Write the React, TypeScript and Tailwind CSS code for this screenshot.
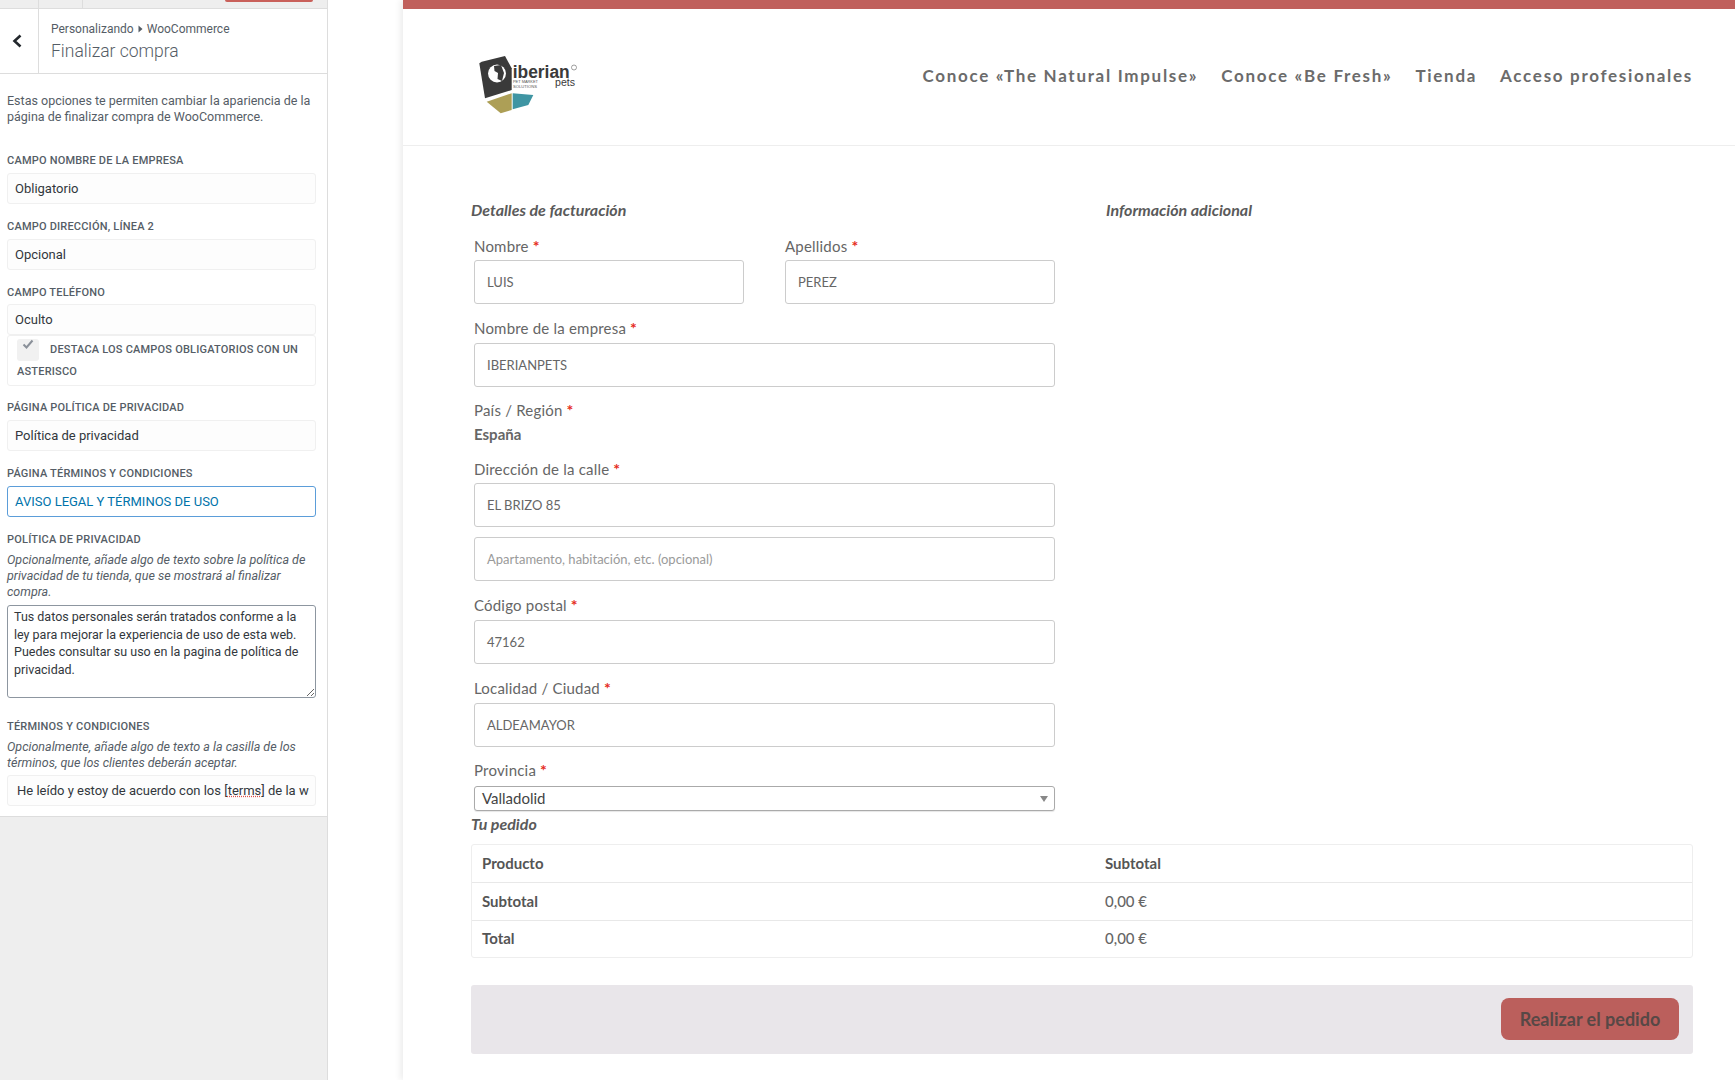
const sideFont = { fontFamily: "Roboto, sans-serif" };

function SideLabel({ children, className = "" }: { children: React.ReactNode; className?: string }) {
  return <div className={`text-[11px] leading-[14px] font-medium uppercase tracking-[0.2px] text-[#555d66] translate-y-[1px] ${className}`}>{children}</div>;
}

function SideBox({ value, active = false }: { value: string; active?: boolean }) {
  return (
    <div
      className={`h-[31px] rounded-[3px] border px-[7px] text-[13px] leading-[29px] whitespace-nowrap overflow-hidden ${
        active ? "border-[#5b9dd9] text-[#0073aa] bg-white" : "border-[#f0f0f0] bg-[#fdfdfd] text-[#32373c]"
      }`}
    >
      {value}
    </div>
  );
}

function Sidebar() {
  return (
    <aside className="w-[328px] shrink-0 bg-[#eeeeee] border-r border-[#dddddd] flex flex-col" style={sideFont}>
      {/* Top bar */}
      <div className="h-[9px] flex items-start border-b border-[#dddddd]">
        <div className="w-[39px] h-full border-r border-[#dddddd]" />
        <div className="w-[44px] h-full border-r border-[#dddddd]" />
        <div className="ml-[142px] w-[88px] h-[2px] rounded-b-[3px] bg-[#c9605a]" />
      </div>

      <div className="bg-white">
        {/* Section header */}
        <div className="h-[65px] flex border-b border-[#dddddd]">
          <div className="w-[39px] border-r border-[#dddddd] flex items-center justify-center">
            <svg width="12" height="14" viewBox="0 0 12 14" className="mt-[-1px] mr-[4px]">
              <path d="M9.5 1.5 L3.5 7 L9.5 12.5" fill="none" stroke="#23282d" strokeWidth="2.6" />
            </svg>
          </div>
          <div className="pl-[12px] pt-[12px] text-[#555d66]">
            <div className="text-[12px] leading-[16px] flex items-center gap-[4px]">
              Personalizando
              <svg width="5" height="8" viewBox="0 0 5 8"><path d="M0.5 0.5 L4.5 4 L0.5 7.5 Z" fill="#555d66" /></svg>
              WooCommerce
            </div>
            <div className="text-[17.5px] leading-[26px] font-light mt-[1px]">Finalizar compra</div>
          </div>
        </div>

        <div className="pl-[7px] pr-[11px] pb-[10px] pt-[19px]">
          <p className="text-[12.5px] leading-[16px] text-[#555d66]">
            Estas opciones te permiten cambiar la apariencia de la
            <br />
            página de finalizar compra de WooCommerce.
          </p>

          <SideLabel className="mt-[28px] mb-[6px]">Campo nombre de la empresa</SideLabel>
          <SideBox value="Obligatorio" />
          <SideLabel className="mt-[15px] mb-[6px]">Campo dirección, línea 2</SideLabel>
          <SideBox value="Opcional" />
          <SideLabel className="mt-[15px] mb-[5px]">Campo teléfono</SideLabel>
          <SideBox value="Oculto" />

          {/* Checkbox row */}
          <div className="h-[51px] border border-[#f0f0f0] rounded-[3px] pl-[9px] pr-[8px] pt-[3px] text-[11px] leading-[22px] font-medium uppercase tracking-[0.2px] text-[#555d66]">
            <span className="inline-flex w-[22px] h-[22px] align-top rounded-[3px] bg-[#f1f1f1] justify-center mr-[11px]">
              <svg width="12" height="12" viewBox="0 0 12 12">
                <path d="M1.5 5.5 L4.5 8.5 L10.5 1.5" fill="none" stroke="#8a9099" strokeWidth="2" />
              </svg>
            </span>
            Destaca los campos obligatorios con un asterisco
          </div>

          <SideLabel className="mt-[14px] mb-[6px]">Página política de privacidad</SideLabel>
          <SideBox value="Política de privacidad" />
          <SideLabel className="mt-[15px] mb-[6px]">Página términos y condiciones</SideLabel>
          <SideBox value="AVISO LEGAL Y TÉRMINOS DE USO" active />
          <SideLabel className="mt-[15px] mb-[6px]">Política de privacidad</SideLabel>
          <p className="text-[12.5px] leading-[16px] italic text-[#555d66] mb-[5px]">
            Opcionalmente, añade algo de texto sobre la política de privacidad de tu tienda, que se mostrará al finalizar compra.
          </p>
          <textarea
            readOnly
            className="block w-full h-[93px] rounded-[3px] border border-[#8d96a0] bg-white px-[6px] py-[2px] text-[12.5px] leading-[17.5px] text-[#32373c] outline-none"
            defaultValue="Tus datos personales serán tratados conforme a la ley para mejorar la experiencia de uso de esta web. Puedes consultar su uso en la pagina de política de privacidad."
          />
          <SideLabel className="mt-[21px] mb-[6px]">Términos y condiciones</SideLabel>
          <p className="text-[12.5px] leading-[16px] italic text-[#555d66] mb-[4px]">
            Opcionalmente, añade algo de texto a la casilla de los términos, que los clientes deberán aceptar.
          </p>
          <div className="h-[31px] rounded-[3px] border border-[#f0f0f0] bg-[#fdfdfd] pl-[9px] pr-[8px] text-[13px] leading-[29px] whitespace-nowrap overflow-hidden text-[#32373c]">
            He leído y estoy de acuerdo con los [
            <span className="underline decoration-dotted decoration-[#e0524a]">terms</span>] de la w
          </div>
        </div>
      </div>
      <div className="flex-1 border-t border-[#dddddd]" />
    </aside>
  );
}

function Logo() {
  return (
    <svg width="106" height="64" viewBox="0 0 106 64">
      <path d="M5.7 9.7 L29 4 L35.7 16.3 L35.7 38 L9 46.3 L3.3 11.3 Z" fill="#3a3a3a" />
      <circle cx="21" cy="21.5" r="9" fill="#ffffff" />
      <path d="M18 14 L25 13 L28 21 L26 29 L21.5 27 L22 21 L18.5 19 Z" fill="#3a3a3a" />
      <path d="M10.7 49.7 L35.7 41.3 L35.7 58 L24.7 61.3 Z" fill="#ad9f56" />
      <path d="M36.7 41.3 L57.3 43 L52.3 53 L36.7 57.3 Z" fill="#3f95a3" />
      <text x="36.7" y="26.3" fontFamily="'Liberation Sans', sans-serif" fontWeight="700" fontSize="18" fill="#3a3a3a" textLength="57" lengthAdjust="spacingAndGlyphs">iberian</text>
      <text x="79" y="33.5" fontFamily="'Liberation Sans', sans-serif" fontSize="10.5" fill="#3a3a3a" textLength="20" lengthAdjust="spacingAndGlyphs">pets</text>
      <text x="37" y="31" fontFamily="'Liberation Sans', sans-serif" fontSize="3.6" fill="#555555" textLength="25" lengthAdjust="spacingAndGlyphs">PET MARKET</text>
      <text x="37" y="36" fontFamily="'Liberation Sans', sans-serif" fontSize="3.6" fill="#555555" textLength="24" lengthAdjust="spacingAndGlyphs">SOLUTIONS</text>
      <circle cx="98" cy="15.5" r="2.5" fill="none" stroke="#777777" strokeWidth="0.7" />
    </svg>
  );
}

function FieldLabel({ children }: { children: string }) {
  return (
    <div className="h-[24px] leading-[24px] text-[15px] text-[#666666] tracking-[0.2px]">
      {children} <span className="text-[#e52b20] font-bold text-[16px]">*</span>
    </div>
  );
}

function Field({ value, placeholder = false }: { value: string; placeholder?: boolean }) {
  return (
    <div
      className={`h-[44px] rounded-[3px] border-[1.5px] border-[#cccccc] bg-white px-[12px] text-[13px] leading-[42px] ${
        placeholder ? "text-[#9a9a9a]" : "text-[#666666]"
      }`}
    >
      {value}
    </div>
  );
}

function Preview() {
  const nav = ["Conoce «The Natural Impulse»", "Conoce «Be Fresh»", "Tienda", "Acceso profesionales"];
  const rows = [
    ["Producto", "Subtotal"],
    ["Subtotal", "0,00 €"],
    ["Total", "0,00 €"],
  ];
  return (
    <main className="flex-1 min-w-0 ml-[75px] bg-white shadow-[-3px_0_6px_rgba(0,0,0,0.07)]" style={{ fontFamily: "Lato, sans-serif" }}>
      <div className="h-[9px] bg-[#c0605c]" />
      <header className="h-[137px] flex items-start justify-between border-b border-[#eeeeee] pl-[73px] pr-[42px]">
        <div className="mt-[43px]"><Logo /></div>
        <nav className="flex gap-[23px] mt-[55px] text-[17px] leading-[24px] font-bold tracking-[1.7px] text-[#6b6b6b]">
          {nav.map((n) => (
            <span key={n} className="whitespace-nowrap">{n}</span>
          ))}
        </nav>
      </header>

      <div className="pl-[68px] pr-[42px] pt-[52px]">
        <div className="flex">
          {/* Billing column */}
          <section className="w-[635px] shrink-0">
            <h3 className="h-[24px] leading-[24px] text-[16px] font-bold italic text-[#5a5a5a] mb-[12px]">Detalles de facturación</h3>
            <div className="pl-[3px] w-[584px]">
              <div className="grid grid-cols-2 gap-x-[41px]">
                <div>
                  <FieldLabel>Nombre</FieldLabel>
                  <div className="mt-[2px]"><Field value="LUIS" /></div>
                </div>
                <div>
                  <FieldLabel>Apellidos</FieldLabel>
                  <div className="mt-[2px]"><Field value="PEREZ" /></div>
                </div>
              </div>
              <div className="mt-[12px]"><FieldLabel>Nombre de la empresa</FieldLabel></div>
              <div className="mt-[3px]"><Field value="IBERIANPETS" /></div>
              <div className="mt-[11px]"><FieldLabel>País / Región</FieldLabel></div>
              <div className="h-[24px] leading-[24px] text-[15px] font-bold text-[#666666]">España</div>
              <div className="mt-[11px]"><FieldLabel>Dirección de la calle</FieldLabel></div>
              <div className="mt-[2px]"><Field value="EL BRIZO 85" /></div>
              <div className="mt-[10px]"><Field value="Apartamento, habitación, etc. (opcional)" placeholder /></div>
              <div className="mt-[12px]"><FieldLabel>Código postal</FieldLabel></div>
              <div className="mt-[3px]"><Field value="47162" /></div>
              <div className="mt-[12px]"><FieldLabel>Localidad / Ciudad</FieldLabel></div>
              <div className="mt-[3px]"><Field value="ALDEAMAYOR" /></div>
              <div className="mt-[11px]"><FieldLabel>Provincia</FieldLabel></div>
              <div className="mt-[4px] h-[25px] rounded-[3px] border border-[#aaaaaa] bg-white pl-[7px] pr-[6px] flex items-center justify-between text-[15px] text-[#444444] shadow-[0_1px_1px_rgba(0,0,0,0.1)]">
                Valladolid
                <svg width="8" height="6" viewBox="0 0 8 6"><path d="M0 0 H8 L4 6 Z" fill="#888888" /></svg>
              </div>
            </div>
          </section>
          <h3 className="h-[24px] leading-[24px] text-[16px] font-bold italic text-[#5a5a5a]">Información adicional</h3>
        </div>

        {/* Order */}
        <h3 className="mt-[1px] h-[24px] leading-[24px] text-[16px] font-bold italic text-[#5a5a5a]">Tu pedido</h3>
        <div className="mt-[8px] rounded-[3px] border border-[#eeeeee]">
          {rows.map((r, i) => (
            <div key={i} className={`h-[37.3px] grid grid-cols-[623px_1fr] items-center pl-[10px] text-[15px] text-[#666666] ${i > 0 ? "border-t border-[#e8e8e8]" : ""}`}>
              <span className="font-bold text-[#555555]">{r[0]}</span>
              <span className={i === 0 ? "font-bold text-[#555555]" : "font-medium"}>{r[1]}</span>
            </div>
          ))}
        </div>

        {/* Payment */}
        <div className="mt-[27px] h-[69px] rounded-[3px] bg-[#e9e6ea] flex items-center justify-end pr-[14px]">
          <button className="h-[42px] w-[178px] rounded-[8px] bg-[#bb5f5c] text-[18px] font-bold text-[#574846]">Realizar el pedido</button>
        </div>
      </div>
    </main>
  );
}

export default function App() {
  return (
    <div className="flex h-[1080px] w-full overflow-hidden bg-white">
      <Sidebar />
      <Preview />
    </div>
  );
}
